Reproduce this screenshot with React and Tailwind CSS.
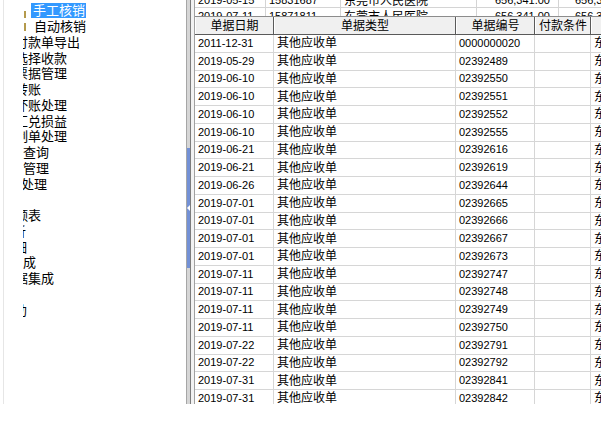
import React from 'react';

// left tree: rows are clipped on the left, so each row carries its own offset
const treeRows = [
  { kind: 'sel', text: '手工核销' },
  { kind: 'child', text: '自动核销' },
  { text: '付款单导出', cls: '-ml-[8px]' },
  { text: '选择收款', cls: '-ml-[8px]' },
  { text: '票据管理', cls: '-ml-[8px]' },
  { text: '转账', cls: '-ml-[8px]' },
  { text: '坏账处理', cls: '-ml-[8px]' },
  { text: '汇兑损益', cls: '-ml-[8px]' },
  { text: '制单处理', cls: '-ml-[8px]' },
  { text: '单据查询', cls: '-ml-[26px]' },
  { text: '账表管理', cls: '-ml-[26px]' },
  { text: '其他处理', cls: '-ml-[28px]' },
  { text: '' },
  { text: '余额表', cls: '-ml-[21px]' },
  { text: '分析', cls: '-ml-[23px]' },
  { text: '明细', cls: '-ml-[22px]' },
  { text: '报表生成', cls: '-ml-[39px]' },
  { text: '数据集成', cls: '-ml-[21px]' },
  { text: '' },
  { text: '帮助', cls: '-ml-[22px]' },
];

const bills = [
  ['2011-12-31', '0000000020'],
  ['2019-05-29', '02392489'],
  ['2019-06-10', '02392550'],
  ['2019-06-10', '02392551'],
  ['2019-06-10', '02392552'],
  ['2019-06-10', '02392555'],
  ['2019-06-21', '02392616'],
  ['2019-06-21', '02392619'],
  ['2019-06-26', '02392644'],
  ['2019-07-01', '02392665'],
  ['2019-07-01', '02392666'],
  ['2019-07-01', '02392667'],
  ['2019-07-01', '02392673'],
  ['2019-07-11', '02392747'],
  ['2019-07-11', '02392748'],
  ['2019-07-11', '02392749'],
  ['2019-07-11', '02392750'],
  ['2019-07-22', '02392791'],
  ['2019-07-22', '02392792'],
  ['2019-07-31', '02392841'],
  ['2019-07-31', '02392842'],
];

const upper = [
  ['2019-05-15', '15831687', '东莞市人民医院', '656,341.00', '656,341.00', 'h-[14px]'],
  ['2019-07-11', '15871811', '东莞市人民医院', '656,341.00', '656,341.00', 'h-[18px]'],
];

const Tree = () => (
  <div className="w-[186px] h-full pl-[3px] bg-white">
    <div className="h-full border-l border-[#e6e6e6] pl-[19px]">
      <div className="h-full overflow-hidden pt-[3px] text-[13px] text-black">
        {treeRows.map((r, i) => {
          if (r.kind === 'sel') {
            return (
              <div key={i} className="h-[15.75px] flex items-center whitespace-nowrap">
                <div className="ml-[1px] w-[2px] h-[7px] self-end mb-[1px] bg-[#b49a4c]" />
                <span className="ml-[5px] h-[15px] flex items-center pl-[2px] pr-[1px] bg-[#3399ff] text-white leading-none">
                  {r.text}
                </span>
              </div>
            );
          }
          if (r.kind === 'child') {
            return (
              <div key={i} className="h-[15.75px] flex items-center whitespace-nowrap">
                <div className="ml-[1px] w-[2px] h-[8px] self-start mt-[4px] bg-[#b49a4c]" />
                <span className="ml-[8px] leading-none">{r.text}</span>
              </div>
            );
          }
          return (
            <div key={i} className="h-[15.75px] flex items-center whitespace-nowrap">
              <span className={['leading-none', r.cls || ''].join(' ')}>{r.text}</span>
            </div>
          );
        })}
      </div>
    </div>
  </div>
);

const Splitter = () => (
  <div className="w-[8px] h-full flex">
    <div className="w-[1px] h-full bg-[#a6a6a6]" />
    <div className="w-[3px] h-full flex flex-col">
      <div className="h-[148px] bg-[#d6d6d6]" />
      <div className="h-[120px] bg-[#7391d6] flex items-center justify-center">
        <div className="w-0 h-0 border-y-[3px] border-y-transparent border-r-[3px] border-r-white" />
      </div>
      <div className="flex-1 bg-[#d6d6d6]" />
    </div>
    <div className="w-[1px] h-full bg-[#7c7c7c]" />
    <div className="w-[3px] h-full bg-[#f2f2f2]" />
  </div>
);

const UpperGrid = () => (
  <div className="h-[16px] overflow-hidden">
    <div className="-mt-[6px]">
      {upper.map((r, i) => (
        <div key={i} className={['flex border-b border-[#d4d4d4]', r[5]].join(' ')}>
          <div className="w-[71px] shrink-0 border-r border-[#d4d4d4] pl-[3px] flex items-center text-[11px] leading-none">{r[0]}</div>
          <div className="w-[75px] shrink-0 border-r border-[#d4d4d4] pl-[3px] flex items-center text-[11px] leading-none">{r[1]}</div>
          <div className="w-[136px] shrink-0 border-r border-[#d4d4d4] pl-[3px] flex items-center text-[12px] leading-none">{r[2]}</div>
          <div className="w-[82px] shrink-0 border-r border-[#d4d4d4] pr-[8px] flex items-center justify-end text-[11px] leading-none">{r[3]}</div>
          <div className="w-[74px] shrink-0 pr-[3px] flex items-center justify-end text-[11px] leading-none">{r[4]}</div>
        </div>
      ))}
    </div>
  </div>
);

const headCell = 'shrink-0 h-full flex items-center justify-center border-l border-white border-r border-r-[#5a5a5a] text-[12px] leading-none';
const cell = 'shrink-0 h-full flex items-center pl-[3px] border-r border-[#d6d6d6] leading-none';

const BillGrid = () => (
  <div className="flex-1 overflow-hidden border-t border-[#8c8c8c]">
    <div className="h-[18px] flex bg-[#f0f0f0] border-b border-[#5a5a5a]">
      <div className={['w-[79px]', headCell].join(' ')}>单据日期</div>
      <div className={['w-[182px]', headCell].join(' ')}>单据类型</div>
      <div className={['w-[79px]', headCell].join(' ')}>单据编号</div>
      <div className={['w-[56px]', headCell].join(' ')}>付款条件</div>
      <div className={['w-[100px]', headCell].join(' ')}>客户名称</div>
    </div>
    {bills.map((b, i) => (
      <div key={i} className="h-[17.75px] flex border-b border-[#d6d6d6]">
        <div className={['w-[79px] text-[11px]', cell].join(' ')}>{b[0]}</div>
        <div className={['w-[182px] text-[12px]', cell].join(' ')}>其他应收单</div>
        <div className={['w-[79px] text-[11px]', cell].join(' ')}>{b[1]}</div>
        <div className={['w-[56px] text-[12px]', cell].join(' ')}></div>
        <div className={['w-[100px] text-[12px]', cell].join(' ')}>东莞市人民医院</div>
      </div>
    ))}
  </div>
);

export default function App() {
  return (
    <div className="w-[601px] h-[443px] bg-white overflow-hidden text-black font-['Liberation_Sans','Noto_Sans_CJK_SC',sans-serif]">
      <div className="h-[404px] flex">
        <Tree />
        <Splitter />
        <div className="flex-1 min-w-0 h-full flex flex-col border-l border-[#a0a0a0] overflow-hidden">
          <UpperGrid />
          <BillGrid />
        </div>
      </div>
    </div>
  );
}
